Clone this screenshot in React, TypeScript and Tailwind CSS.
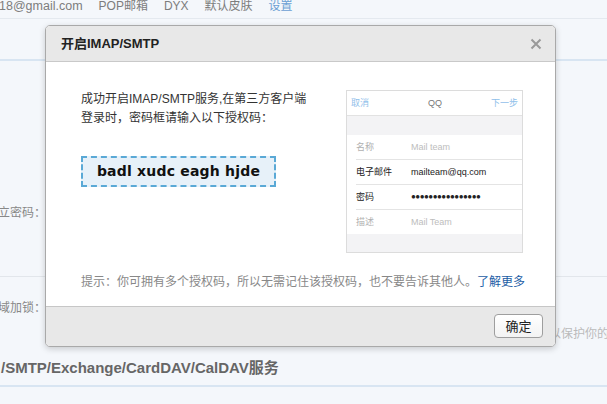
import React from "react";

const CJK = "font-['Liberation_Sans','Noto_Sans_CJK_SC',sans-serif]";

function PhoneShot() {
  return (
    <div className="w-[177px] h-[163px] shrink-0 border border-[#dcdcdc] bg-[#f3f3f5] flex flex-col text-[9px] leading-none">
      <div className="h-[25px] bg-white border-b border-[#e2e2e2] flex items-center justify-between px-[4px]">
        <span className="text-[#8fc0ea]">取消</span>
        <span className="text-[#777] pl-[10px]">QQ</span>
        <span className="text-[#8fc0ea]">下一步</span>
      </div>
      <div className="h-[19px]" />
      <div className="bg-white flex flex-col pl-[9px]">
        <div className="h-[25px] flex items-center border-b border-[#e4e4e4]">
          <span className="w-[55px] text-[#b0b0b0]">名称</span>
          <span className="text-[#bdbdbd]">Mail team</span>
        </div>
        <div className="h-[25px] flex items-center border-b border-[#e4e4e4]">
          <span className="w-[55px] text-[#222]">电子邮件</span>
          <span className="text-[#222]">mailteam@qq.com</span>
        </div>
        <div className="h-[25px] flex items-center border-b border-[#e4e4e4]">
          <span className="w-[55px] text-[#222]">密码</span>
          <span className="text-[#222] text-[8px] tracking-[-0.5px]">●●●●●●●●●●●●●●●●</span>
        </div>
        <div className="h-[24px] flex items-center">
          <span className="w-[55px] text-[#b0b0b0]">描述</span>
          <span className="text-[#bdbdbd]">Mail Team</span>
        </div>
      </div>
      <div className="flex-1" />
    </div>
  );
}

export default function App() {
  return (
    <div className={`relative w-[607px] h-[404px] overflow-hidden bg-[#f4f7fb] ${CJK}`}>
      {/* background page */}
      <div className="flex flex-col">
        <div className="h-[19px] border-b border-[#e4e9ef] flex items-start gap-[16px] text-[12.5px] leading-[12px] text-[#7d7d7d] -ml-[1px] whitespace-nowrap">
          <span>18@gmail.com</span>
          <span className="text-[12px]">POP邮箱</span>
          <span className="text-[12px]">DYX</span>
          <span className="text-[12px]">默认皮肤</span>
          <span className="text-[12px] text-[#6b9fd3]">设置</span>
        </div>
        <div className="h-[42px] border-b-2 border-[#d8e5f2]" />
        <div className="h-[216px] border-b border-[#e2e6eb] flex">
          <div className="w-[46px] shrink-0 pt-[145px] text-[12px] leading-[14px] text-[#888] whitespace-nowrap overflow-hidden flex justify-end">
            <span>独立密码：</span>
          </div>
        </div>
        <div className="h-[80px] flex">
          <div className="w-[46px] shrink-0 pt-[24px] text-[12px] leading-[14px] text-[#888] whitespace-nowrap overflow-hidden flex justify-end">
            <span>域加锁：</span>
          </div>
          <div className="flex-1 pt-[50px] pl-[503px] text-[12px] leading-[14px] text-[#bbb] whitespace-nowrap overflow-hidden">
            以保护你的邮箱
          </div>
        </div>
        <div className="h-[30px] border-b-2 border-[#d8e5f2] flex items-start pt-[1px] text-[15px] leading-[20px] font-bold text-[#666] whitespace-nowrap pl-[1px]">
          /SMTP/Exchange/CardDAV/CalDAV服务
        </div>
      </div>

      {/* dialog */}
      <div className="absolute left-[45px] top-[25px] w-[511px] h-[322px] border border-[#a9a9a9] rounded-[5px] bg-white shadow-[0_2px_6px_rgba(0,0,0,0.18)] flex flex-col overflow-hidden">
        <div className="h-[36px] shrink-0 bg-[#e8e8e8] border-b border-[#c9c9c9] flex items-center justify-between pl-[15px] pr-[13px]">
          <span className="text-[13px] font-bold text-[#222]">开启IMAP/SMTP</span>
          <svg width="12" height="12" viewBox="0 0 12 12" className="text-[#9a9a9a]">
            <path d="M1.5 1.5 L10.5 10.5 M10.5 1.5 L1.5 10.5" stroke="currentColor" strokeWidth="2" fill="none" />
          </svg>
        </div>
        <div className="flex-1 flex flex-col pt-[28px] pl-[35px]">
          <div className="flex h-[163px]">
            <div className="w-[265px] flex flex-col">
              <p className="text-[12px] leading-[19px] text-[#333]">
                成功开启IMAP/SMTP服务,在第三方客户端
                <br />
                登录时，密码框请输入以下授权码：
              </p>
              <div className="mt-[28px] w-[195px] h-[31px] border-2 border-dashed border-[#5aa9d6] bg-[#e7f1f9] flex items-center justify-center">
                <span className="font-['DejaVu_Sans',sans-serif] font-bold text-[14px] tracking-[0.2px] text-[#111]">
                  badl xudc eagh hjde
                </span>
              </div>
            </div>
            <PhoneShot />
          </div>
          <p className="mt-[21px] text-[12px] leading-[16px] text-[#888] whitespace-nowrap">
            提示：你可拥有多个授权码，所以无需记住该授权码，也不要告诉其他人。
            <span className="text-[#1d5ea6]">了解更多</span>
          </p>
        </div>
        <div className="h-[40px] shrink-0 bg-[#e8e8e8] border-t border-[#c6c6c6] flex items-start justify-end pr-[12px] pt-[7px]">
          <button className="w-[49px] h-[24px] rounded-[4px] border border-[#9e9e9e] bg-gradient-to-b from-white to-[#f3f3f3] text-[13px] leading-none text-[#222]">
            确定
          </button>
        </div>
      </div>
    </div>
  );
}
